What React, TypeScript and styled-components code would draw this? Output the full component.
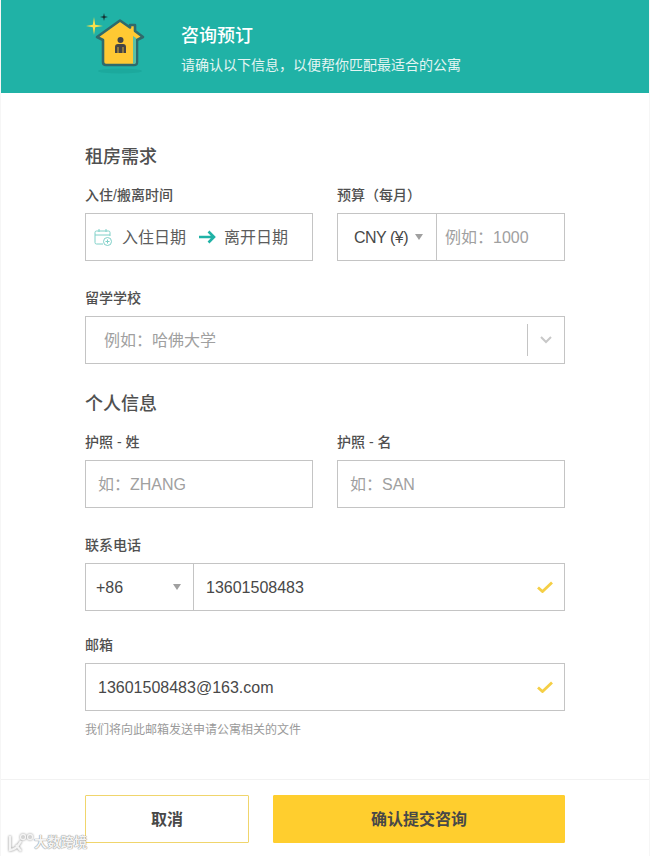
import * as React from 'react';
import styled, { createGlobalStyle } from 'styled-components';

const GlobalStyle = createGlobalStyle`
  html, body {
    margin: 0;
    padding: 0;
    background: #fff;
  }
  * {
    box-sizing: border-box;
  }
`

const FONT = `"Liberation Sans", "Noto Sans CJK SC", sans-serif`

const Page = styled.div`
  width: 650px;
  height: 856px;
  display: flex;
  flex-direction: column;
  overflow: hidden;
  position: relative;
  font-family: ${FONT};
  color: #484848;
  background: #fff;
  border-left: 1px solid #f6f6f6;
  border-right: 1px solid #f6f6f6;
`

const Header = styled.header`
  height: 93px;
  flex: none;
  background: #20b2a6;
  display: flex;
  padding-left: 83px;
`

const HeaderText = styled.div`
  margin-left: 35px;
  padding-top: 24px;
  color: #fff;
`

const HeaderTitle = styled.div`
  font-size: 18px;
  line-height: 24px;
  font-weight: 500;
`

const HeaderSub = styled.div`
  margin-top: 8px;
  font-size: 14px;
  line-height: 18px;
  color: #e4f5f3;
`

const Form = styled.div`
  flex: 1;
  padding: 53px 84px 0;
`

const SectionTitle = styled.div<{ $top?: number }>`
  font-size: 18px;
  line-height: 22px;
  font-weight: 500;
  color: #505050;
  margin-top: ${p => p.$top || 0}px;
`

const Row = styled.div`
  display: flex;
  gap: 24px;
`

const Field = styled.div<{ $top?: number }>`
  flex: 1;
  min-width: 0;
  margin-top: ${p => p.$top || 0}px;
`

const Label = styled.div`
  font-size: 14px;
  line-height: 18px;
  font-weight: 500;
  color: #505050;
  margin-bottom: 9px;
`

const Box = styled.div`
  height: 48px;
  display: flex;
  align-items: center;
  border: 1px solid #c4c4c4;
  background: #fff;
  font-size: 16px;
`

const Value = styled.span<{ $left?: number }>`
  flex: 1;
  padding-left: ${p => p.$left || 12}px;
  padding-top: 2px;
  color: #484848;
`

const Placeholder = styled.span<{ $left?: number }>`
  flex: 1;
  padding-left: ${p => p.$left || 12}px;
  padding-bottom: 2px;
  color: #a0a0a0;
`

const DateText = styled.span`
  color: #5c5c5c;
  padding-bottom: 2px;
`

const CalendarWrap = styled.span`
  display: flex;
  margin: 0 9px 0 8px;
`

const ArrowWrap = styled.span`
  display: flex;
  margin: 0 8px 0 13px;
`

const CurrencySelect = styled.div`
  width: 99px;
  height: 100%;
  flex: none;
  display: flex;
  align-items: center;
  padding-left: 16px;
  padding-top: 2px;
  border-right: 1px solid #c4c4c4;
  color: #484848;
  letter-spacing: -0.5px;
`

const CodeSelect = styled.div`
  width: 108px;
  height: 100%;
  flex: none;
  display: flex;
  align-items: center;
  justify-content: space-between;
  padding: 2px 12px 0 10px;
  border-right: 1px solid #c4c4c4;
  color: #484848;
`

const Caret = styled.span<{ $left?: number }>`
  width: 0;
  height: 0;
  margin-left: ${p => p.$left || 0}px;
  margin-top: -2px;
  border-left: 4.5px solid transparent;
  border-right: 4.5px solid transparent;
  border-top: 6px solid #a0a0a0;
`

const ChevronWrap = styled.div`
  width: 37px;
  height: 32px;
  flex: none;
  display: flex;
  align-items: center;
  justify-content: center;
  border-left: 1px solid #c4c4c4;
`

const CheckWrap = styled.span`
  display: flex;
  margin-right: 11px;
`

const Hint = styled.div`
  margin-top: 11px;
  font-size: 12px;
  line-height: 16px;
  color: #9a9a9a;
`

const Footer = styled.footer`
  height: 77px;
  flex: none;
  border-top: 1px solid #f2f2f2;
  padding: 15px 84px 0;
  display: flex;
  gap: 24px;
`

const Button = styled.button<{ $primary?: boolean }>`
  height: 48px;
  width: ${p => (p.$primary ? 292 : 164)}px;
  border: 1px solid ${p => (p.$primary ? '#ffce2e' : '#f0d56c')};
  border-radius: 1px;
  background: ${p => (p.$primary ? '#ffce2e' : '#fff')};
  color: #484848;
  font-family: ${FONT};
  font-size: 16px;
  font-weight: 700;
  padding: 0 0 2px;
`

const Watermark = styled.div`
  position: absolute;
  left: 6px;
  bottom: 3px;
  display: flex;
  align-items: center;
  font-size: 13.3px;
  line-height: 18px;
  font-weight: 700;
  color: #f4f4f4;
  text-shadow: 0 0 1px #888, 0 0 1px #888;
`

const HouseLogo = () => (
  <svg width="62" height="76" viewBox="0 0 62 76" style={{ flex: 'none' }}>
    <ellipse cx="36" cy="71" rx="22" ry="2.5" fill="#1ca99d" />
    <path d="M13 37 L36 20.5 L46 27.5 L46 25 L51 25 L51 31 L59 37 L53 40 L53 62 Q53 65 50 65 L22 65 Q19 65 19 62 L19 40 Z" fill="#ffc933" stroke="#2f6a6c" strokeWidth="2.6" strokeLinejoin="round" />
    <path d="M49 36 L52 38 L52 62 Q52 64 50 64 L49 64 Z" fill="#58bfa6" />
    <circle cx="36.5" cy="40" r="3" fill="#444" />
    <path d="M31 53 L31 47 Q31 44 34 44 L39 44 Q42 44 42 47 L42 53 Z" fill="#444" />
    <path d="M34 47 L34 53 M39 47 L39 53" stroke="#ffc933" strokeWidth="0.8" />
    <path d="M10 17 L11.2 24.8 L19 26 L11.2 27.2 L10 35 L8.8 27.2 L2 26 L8.8 24.8 Z" fill="#f7e04a" />
    <path d="M20 13 L20.7 16.3 L24 17 L20.7 17.7 L20 21 L19.3 17.7 L16 17 L19.3 16.3 Z" fill="#14282a" />
  </svg>
)

const CalendarIcon = () => (
  <svg width="19" height="19" viewBox="0 0 19 19" fill="none" stroke="#7fd0c8" strokeWidth="1">
    <path d="M9 16 H2.5 Q1 16 1 14.5 V4.5 Q1 3 2.5 3 H14.5 Q16 3 16 4.5 V8" />
    <path d="M1 7 H16 M5 1 V4 M12 1 V4" />
    <circle cx="13.5" cy="13.5" r="4" />
    <path d="M13.5 11.5 V15.5 M11.5 13.5 H15.5" />
  </svg>
)

const ArrowIcon = () => (
  <svg width="17" height="14" viewBox="0 0 17 14" fill="none" stroke="#20b2a6" strokeWidth="2.6">
    <path d="M0 7 H15 M9.5 1.5 L15 7 L9.5 12.5" />
  </svg>
)

const Chevron = () => (
  <svg width="12" height="8" viewBox="0 0 12 8" fill="none" stroke="#c8c8c8" strokeWidth="2">
    <path d="M1 1 L6 6 L11 1" />
  </svg>
)

const Check = () => (
  <svg width="16" height="12" viewBox="0 0 16 12" fill="none" stroke="#f5cf45" strokeWidth="2.8">
    <path d="M1 6.5 L5.5 10.5 L15 1.5" />
  </svg>
)

const WatermarkLogo = () => (
  <svg width="27" height="20" viewBox="0 0 27 20" fill="none" stroke="#f4f4f4" strokeWidth="2.4" style={{ filter: 'drop-shadow(0 0 1px #888)' }}>
    <path d="M3 3 V17 Q9 17 14 8 M9 12 L14 18" />
    <circle cx="16" cy="4" r="2.5" strokeWidth="1.3" />
    <circle cx="23" cy="4" r="2.5" strokeWidth="1.3" />
  </svg>
)

export default class App extends React.Component {
  public render() {
    return (
      <Page>
        <GlobalStyle />
        <Header>
          <HouseLogo />
          <HeaderText>
            <HeaderTitle>咨询预订</HeaderTitle>
            <HeaderSub>请确认以下信息，以便帮你匹配最适合的公寓</HeaderSub>
          </HeaderText>
        </Header>
        <Form>
          <SectionTitle>租房需求</SectionTitle>
          <Row>
            <Field $top={18}>
              <Label>入住/搬离时间</Label>
              <Box>
                <CalendarWrap><CalendarIcon /></CalendarWrap>
                <DateText>入住日期</DateText>
                <ArrowWrap><ArrowIcon /></ArrowWrap>
                <DateText>离开日期</DateText>
              </Box>
            </Field>
            <Field $top={18}>
              <Label>预算（每月）</Label>
              <Box>
                <CurrencySelect>CNY (¥)<Caret $left={7} /></CurrencySelect>
                <Placeholder $left={8}>例如：1000</Placeholder>
              </Box>
            </Field>
          </Row>
          <Field $top={28}>
            <Label>留学学校</Label>
            <Box>
              <Placeholder $left={18}>例如：哈佛大学</Placeholder>
              <ChevronWrap><Chevron /></ChevronWrap>
            </Box>
          </Field>
          <SectionTitle $top={29}>个人信息</SectionTitle>
          <Row>
            <Field $top={18}>
              <Label>护照 - 姓</Label>
              <Box><Placeholder>如：ZHANG</Placeholder></Box>
            </Field>
            <Field $top={18}>
              <Label>护照 - 名</Label>
              <Box><Placeholder>如：SAN</Placeholder></Box>
            </Field>
          </Row>
          <Field $top={28}>
            <Label>联系电话</Label>
            <Box>
              <CodeSelect>+86<Caret /></CodeSelect>
              <Value>13601508483</Value>
              <CheckWrap><Check /></CheckWrap>
            </Box>
          </Field>
          <Field $top={25}>
            <Label>邮箱</Label>
            <Box>
              <Value>13601508483@163.com</Value>
              <CheckWrap><Check /></CheckWrap>
            </Box>
          </Field>
          <Hint>我们将向此邮箱发送申请公寓相关的文件</Hint>
        </Form>
        <Footer>
          <Button>取消</Button>
          <Button $primary>确认提交咨询</Button>
        </Footer>
        <Watermark><WatermarkLogo />大数跨境</Watermark>
      </Page>
    )
  }
}
